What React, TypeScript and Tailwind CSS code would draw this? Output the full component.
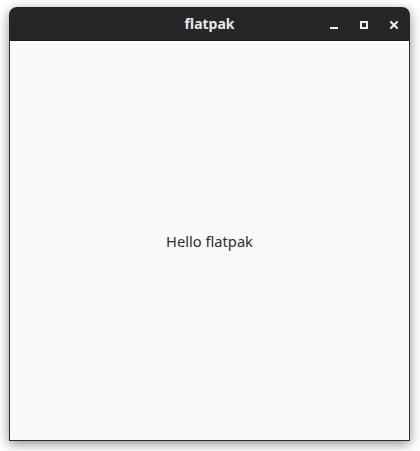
import React from 'react';

export default function App() {
  return (
    <div className="w-[420px] h-[451px] bg-white pl-[9px] pt-[7px]" style={{ fontFamily: '"Noto Sans", "Open Sans", sans-serif' }}>
      {/* Window */}
      <div className="w-[401px] h-[434px] flex flex-col rounded-t-[8px] shadow-[0_3px_12px_rgba(0,0,0,0.45)]">
        {/* Header bar */}
        <div className="relative h-[34px] bg-[#262626] rounded-t-[8px] border-b border-[#1a1a1a] flex items-center justify-center">
          <span className="text-[14px] font-bold text-[#e8e8e8] leading-none">flatpak</span>
          <div className="absolute right-[12px] top-0 h-full flex items-center gap-[22px]">
            <svg width="8" height="8" viewBox="0 0 8 8" className="mt-[3px]">
              <rect x="0" y="6" width="8" height="2" fill="#eeeeee" />
            </svg>
            <svg width="8" height="8" viewBox="0 0 8 8" className="mt-[3px]">
              <rect x="1" y="1" width="6" height="6" fill="none" stroke="#eeeeee" strokeWidth="2" />
            </svg>
            <svg width="8" height="8" viewBox="0 0 8 8" className="mt-[3px]">
              <path d="M1 1L7 7M7 1L1 7" stroke="#eeeeee" strokeWidth="2" strokeLinecap="square" />
            </svg>
          </div>
        </div>
        {/* Content */}
        <div className="flex-1 bg-[#fafafa] border-x border-b border-[#2b2b2b] flex items-center justify-center">
          <span className="text-[14.7px] text-[#2e2e2e] mt-[2px]">Hello flatpak</span>
        </div>
      </div>
    </div>
  );
}
